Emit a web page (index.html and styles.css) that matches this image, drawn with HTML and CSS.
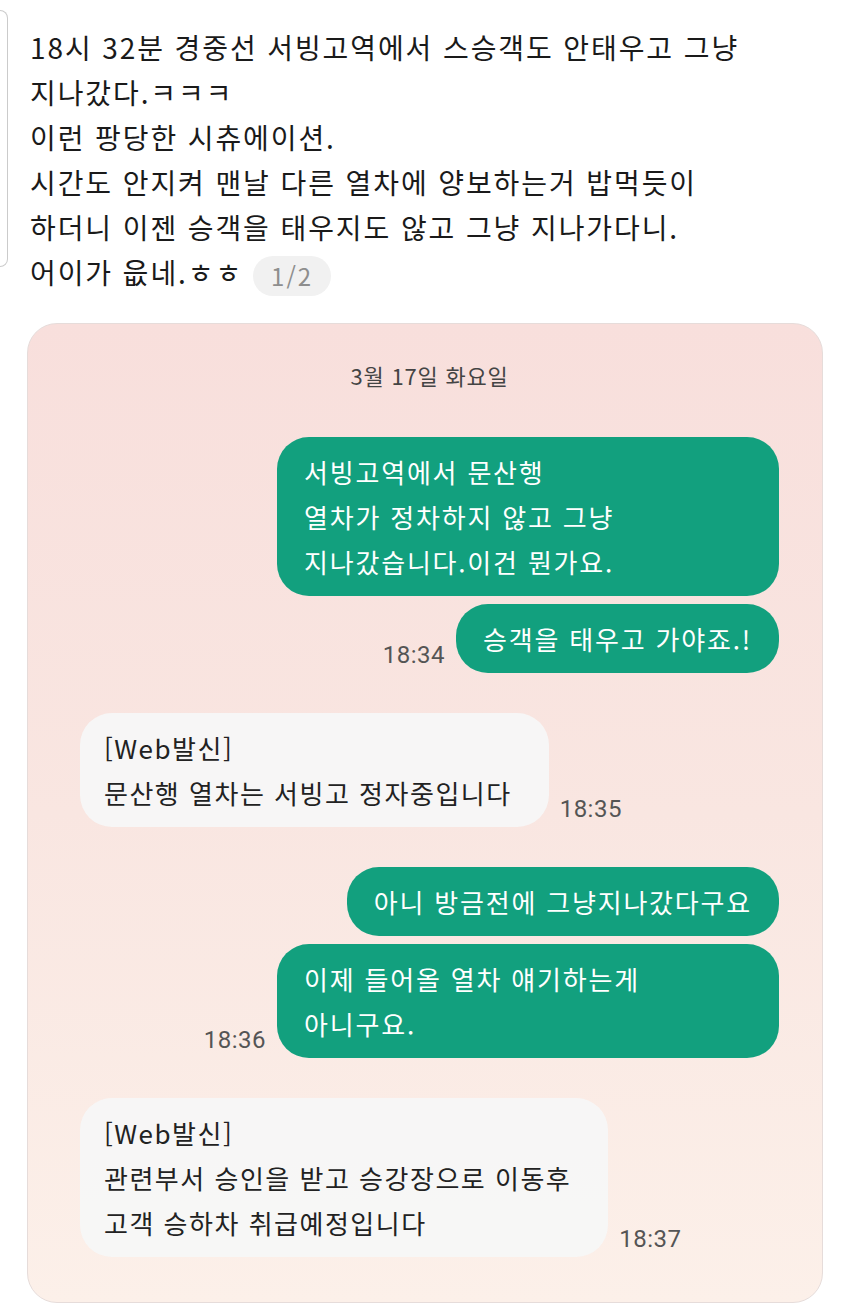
FILE: index.html
```html
<!DOCTYPE html>
<html lang="ko">
<head>
  <meta charset="UTF-8" />
  <title>경중선 서빙고역</title>
  <meta name="viewport" content="width=device-width, initial-scale=1.0"/>
  <link rel="stylesheet" href="styles.css">
</head>
<body>

<div class="post">
  <div class="prev-edge"></div>
  <div class="post-text">
    18시 32분 경중선 서빙고역에서 스승객도 안태우고 그냥<br>
    지나갔다.ㅋㅋㅋ<br>
    이런 팡당한 시츄에이션.<br>
    시간도 안지켜 맨날 다른 열차에 양보하는거 밥먹듯이<br>
    하더니 이젠 승객을 태우지도 않고 그냥 지나가다니.<br>
    어이가 읎네.ㅎㅎ<span class="pager">1/2</span>
  </div>
</div>

<div class="chat">
  <div class="date">3월 17일 화요일</div>

  <div class="row out">
    <div class="bubble sent wide">서빙고역에서 문산행<br>열차가 정차하지 않고 그냥<br>지나갔습니다.이건 뭔가요.</div>
  </div>
  <div class="row out close">
    <span class="time">18:34</span>
    <div class="bubble sent">승객을 태우고 가야죠.!</div>
  </div>

  <div class="row">
    <div class="bubble recv">[Web발신]<br>문산행 열차는 서빙고 정자중입니다</div>
    <span class="time">18:35</span>
  </div>

  <div class="row out">
    <div class="bubble sent">아니 방금전에 그냥지나갔다구요</div>
  </div>
  <div class="row out close">
    <span class="time">18:36</span>
    <div class="bubble sent wide">이제 들어올 열차 얘기하는게<br>아니구요.</div>
  </div>

  <div class="row">
    <div class="bubble recv">[Web발신]<br>관련부서 승인을 받고 승강장으로 이동후<br>고객 승하차 취급예정입니다</div>
    <span class="time">18:37</span>
  </div>
</div>

</body>
</html>
```

FILE: styles.css
```css
body { margin: 0; background: #fff; font-family: "Noto Sans CJK KR", "Noto Sans", sans-serif; color: #1a1a1a; }

.post { display: flex; align-items: flex-start; }
.prev-edge { width: 7px; height: 255px; margin-top: 10px; border: 1.5px solid #cbcbcb; border-left: none; border-radius: 0 9px 9px 0; }
.post-text { margin-left: 22px; padding-top: 25px; font-size: 28px; line-height: 45px; letter-spacing: 1.9px; }
.pager { display: inline-block; margin-left: 10px; padding: 0 18px; line-height: 40px; border-radius: 20px; background: #f1f1f1; color: #8e8e8e; font-size: 24px; letter-spacing: 2px; vertical-align: middle; }

.chat { margin: 27px 0 0 27px; width: 796px; box-sizing: border-box; padding: 36px 43px 45px 52px; border: 1px solid #e6dcda; border-radius: 30px; background: linear-gradient(to bottom, #f8dfdc 0%, #f9e6e1 50%, #fcf0e9 100%); }
.date { text-align: center; font-size: 22px; line-height: 30px; color: #444; letter-spacing: 0.8px; margin-bottom: 47px; }

.row { display: flex; align-items: flex-end; gap: 11px; margin-top: 40px; }
.date + .row { margin-top: 0; }
.row.out { justify-content: flex-end; }
.row.close { margin-top: 8px; }

.bubble { padding: 12px 27px; font-size: 26px; line-height: 45px; border-radius: 32px; }
.bubble.sent { background: #12a07e; color: #fff; letter-spacing: 1.8px; }
.bubble.wide { width: 502px; box-sizing: border-box; }
.bubble.recv { background: rgba(247, 247, 247, 0.95); color: #222; letter-spacing: 1.5px; padding: 12px 37px 12px 24px; }

.time { font-family: Roboto, "Noto Sans", sans-serif; font-size: 24px; letter-spacing: 0.5px; color: #555; padding-bottom: 4px; }
```
